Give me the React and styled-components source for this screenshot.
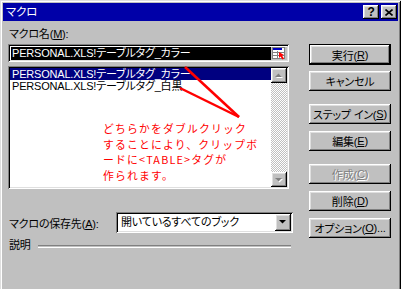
import React from 'react';
import styled, { createGlobalStyle, css } from 'styled-components';

const uiFont = `"Liberation Sans", "Noto Sans CJK JP", sans-serif`;

const GlobalStyle = createGlobalStyle`
  html, body {
    margin: 0;
    padding: 0;
    background: #c0c0c0;
    overflow: hidden;
  }
  body {
    font-family: ${uiFont};
    font-size: 11px;
    letter-spacing: -0.2px;
    font-feature-settings: "palt" 1;
    color: #000;
  }
`;

const raised = css`
  background: #c0c0c0;
  box-shadow: inset -1px -1px #000, inset 1px 1px #fff,
    inset -2px -2px #808080, inset 2px 2px #dfdfdf;
`;

const sunken = css`
  box-shadow: inset 1px 1px #808080, inset -1px -1px #fff,
    inset 2px 2px #000, inset -2px -2px #dfdfdf;
`;

const Window = styled.div`
  position: relative;
  width: 401px;
  height: 289px;
  box-sizing: border-box;
  padding: 3px 3px 0 3px;
  display: flex;
  flex-direction: column;
  background: #c0c0c0;
  box-shadow: inset 1px 1px #dfdfdf, inset -1px 0 #000,
    inset 2px 2px #fff, inset -2px 0 #808080;
  overflow: hidden;
`;

const TitleBar = styled.div`
  height: 18px;
  background: #0000a8;
  display: flex;
  align-items: center;
  padding: 0 1px 0 3px;
  color: #fff;
`;

const TitleText = styled.div`
  flex: 1;
  line-height: 18px;
  font-size: 11.5px;
`;

const CaptionButton = styled.div`
  ${raised};
  width: 16px;
  height: 14px;
  margin-left: ${p => p.$ml || 0}px;
  display: flex;
  align-items: center;
  justify-content: center;
  color: #000;
  font-weight: bold;
  font-size: 12px;
  font-family: "Liberation Sans", sans-serif;
  line-height: 14px;
`;

const Body = styled.div`
  display: flex;
  padding-left: 5px;
`;

const LeftCol = styled.div`
  width: 285px;
  display: flex;
  flex-direction: column;
`;

const RightCol = styled.div`
  width: 82px;
  margin-left: 16px;
  display: flex;
  flex-direction: column;
`;

const Label = styled.div`
  padding-left: 1px;
  line-height: 14px;
  margin-top: ${p => p.$mt || 0}px;
  white-space: nowrap;
`;

const Field = styled.div`
  ${sunken};
  width: 281px;
  height: 18px;
  margin-top: 3px;
  box-sizing: border-box;
  padding: 3px 2px 2px 3px;
  display: flex;
  background: #fff;
`;

const FieldText = styled.div`
  flex: 1;
  background: #000;
  color: #fff;
  line-height: 13px;
  padding-left: 1px;
  white-space: nowrap;
  overflow: hidden;
`;

const FieldIcon = styled.div`
  width: 16px;
  height: 13px;
  background: #c0c0c0;
  display: flex;
`;

const ListBox = styled.div`
  ${sunken};
  width: 281px;
  height: 123px;
  margin-top: 4px;
  box-sizing: border-box;
  padding: 2px;
  display: flex;
  background: #fff;
`;

const Items = styled.div`
  flex: 1;
  display: flex;
  flex-direction: column;
`;

const Item = styled.div`
  height: 12px;
  line-height: 12px;
  padding-left: 2px;
  white-space: nowrap;
  background: ${p => (p.$selected ? '#000080' : 'transparent')};
  color: ${p => (p.$selected ? '#fff' : '#000')};
`;

const ScrollBar = styled.div`
  width: 16px;
  display: flex;
  flex-direction: column;
`;

const ScrollArrow = styled.div`
  ${raised};
  height: 15px;
  display: flex;
`;

const ScrollTrack = styled.div`
  flex: 1;
  background-color: #fff;
  background-image: conic-gradient(#c0c0c0 25%, #fff 0 50%, #c0c0c0 0 75%, #fff 0);
  background-size: 2px 2px;
`;

const ComboRow = styled.div`
  margin-top: 23px;
  height: 21px;
  display: flex;
  align-items: center;
`;

const ComboLabel = styled.div`
  width: 107px;
  padding-left: 1px;
  white-space: nowrap;
`;

const Combo = styled.div`
  ${sunken};
  flex: 1;
  height: 21px;
  box-sizing: border-box;
  padding: 2px;
  display: flex;
  align-items: center;
  background: #fff;
`;

const ComboText = styled.div`
  flex: 1;
  padding-left: 3px;
  line-height: 17px;
  white-space: nowrap;
`;

const ComboButton = styled.div`
  ${raised};
  width: 16px;
  height: 17px;
  display: flex;
`;

const DescRow = styled.div`
  margin-top: 5px;
  height: 14px;
  display: flex;
  align-items: center;
  padding-right: 2px;
`;

const Separator = styled.div`
  flex: 1;
  height: 1px;
  margin-left: 7px;
  border-top: 1px solid #808080;
  border-bottom: 1px solid #fff;
  margin-top: 2px;
`;

const Button = styled.div`
  ${raised};
  height: ${p => (p.$default ? 21 : 20)}px;
  margin-top: ${p => p.$mt || 0}px;
  box-sizing: border-box;
  display: flex;
  align-items: center;
  justify-content: center;
  white-space: nowrap;
  color: ${p => (p.$disabled ? '#808080' : '#000')};
  text-shadow: ${p => (p.$disabled ? '1px 1px #fff' : 'none')};
  ${p =>
    p.$default &&
    css`
      box-shadow: inset 0 0 0 1px #000, inset -2px -2px #000, inset 2px 2px #fff,
        inset -3px -3px #808080, inset 3px 3px #dfdfdf;
    `}
`;

const RedNote = styled.div`
  position: absolute;
  left: 103px;
  top: 121px;
  color: #ff0000;
  font-family: "Noto Sans CJK JP", sans-serif;
  font-feature-settings: normal;
  font-size: 10.8px;
  letter-spacing: 1.2px;
  line-height: 15.7px;
  white-space: nowrap;
`;

const Overlay = styled.svg`
  position: absolute;
  left: 0;
  top: 0;
  pointer-events: none;
`;

const U = styled.span`
  text-decoration: underline;
`;

const UpArrow = () => (
  <svg width="16" height="15" viewBox="0 0 16 15">
    <polygon points="5,10 12,10 8.5,6.5" fill="#fff" />
    <polygon points="4,9 11,9 7.5,5.5" fill="#808080" />
  </svg>
);

const DownArrow = ({ color = '#808080', shadow = true, h = 15 }) => (
  <svg width="16" height={h} viewBox={`0 0 16 ${h}`}>
    {shadow && <polygon points="5,7 12,7 8.5,10.5" fill="#fff" />}
    <polygon points="4,6 11,6 7.5,9.5" fill={color} />
  </svg>
);

const MacroIcon = () => (
  <svg width="16" height="13" viewBox="0 0 16 13">
    <rect x="1.5" y="0.5" width="12" height="11" fill="#fff" stroke="#808080" />
    <rect x="2" y="1" width="9" height="2" fill="#0000c0" />
    <line x1="2" y1="5.5" x2="13" y2="5.5" stroke="#808080" />
    <line x1="2" y1="8.5" x2="13" y2="8.5" stroke="#808080" />
    <line x1="6.5" y1="4" x2="6.5" y2="11" stroke="#808080" />
    <polygon points="8,5 8,11 9.5,9.5 11.5,12.5 13,11.5 11,8.5 13,8" fill="#ff0000" />
  </svg>
);

export default function App() {
  return (
    <>
      <GlobalStyle />
      <Window>
        <TitleBar>
          <TitleText>マクロ</TitleText>
          <CaptionButton>?</CaptionButton>
          <CaptionButton $ml={2}>
            <svg width="8" height="7" viewBox="0 0 8 7">
              <path d="M0.5 0.5 L7.5 6.5 M7.5 0.5 L0.5 6.5" stroke="#000" strokeWidth="1.6" />
            </svg>
          </CaptionButton>
        </TitleBar>
        <Body>
          <LeftCol>
            <Label $mt={6}>
              マクロ名(<U>M</U>):
            </Label>
            <Field>
              <FieldText>PERSONAL.XLS!テーブルタグ_カラー</FieldText>
              <FieldIcon>
                <MacroIcon />
              </FieldIcon>
            </Field>
            <ListBox>
              <Items>
                <Item $selected>PERSONAL.XLS!テーブルタグ_カラー</Item>
                <Item>PERSONAL.XLS!テーブルタグ_白黒</Item>
              </Items>
              <ScrollBar>
                <ScrollArrow>
                  <UpArrow />
                </ScrollArrow>
                <ScrollTrack />
                <ScrollArrow>
                  <DownArrow />
                </ScrollArrow>
              </ScrollBar>
            </ListBox>
            <ComboRow>
              <ComboLabel>
                マクロの保存先(<U>A</U>):
              </ComboLabel>
              <Combo>
                <ComboText>開いているすべてのブック</ComboText>
                <ComboButton>
                  <DownArrow color="#000" shadow={false} h={17} />
                </ComboButton>
              </Combo>
            </ComboRow>
            <DescRow>
              <Label>説明</Label>
              <Separator />
            </DescRow>
          </LeftCol>
          <RightCol>
            <Button $default $mt={23}>
              実行(<U>R</U>)
            </Button>
            <Button $mt={6}>キャンセル</Button>
            <Button $mt={13}>
              ステップ イン(<U>S</U>)
            </Button>
            <Button $mt={7}>
              編集(<U>E</U>)
            </Button>
            <Button $mt={13} $disabled>
              作成(<U>C</U>)
            </Button>
            <Button $mt={7}>
              削除(<U>D</U>)
            </Button>
            <Button $mt={7}>
              オプション(<U>O</U>)...
            </Button>
          </RightCol>
        </Body>
        <RedNote>
          どちらかをダブルクリック
          <br />
          することにより、クリップボ
          <br />
          ードに{'<TABLE>'}タグが
          <br />
          作られます。
        </RedNote>
        <Overlay width="401" height="289" viewBox="0 0 401 289">
          <line x1="185" y1="67" x2="239" y2="117" stroke="#ff0000" strokeWidth="2.5" />
          <line x1="180" y1="88" x2="239" y2="117" stroke="#ff0000" strokeWidth="2.5" />
        </Overlay>
      </Window>
    </>
  );
}
